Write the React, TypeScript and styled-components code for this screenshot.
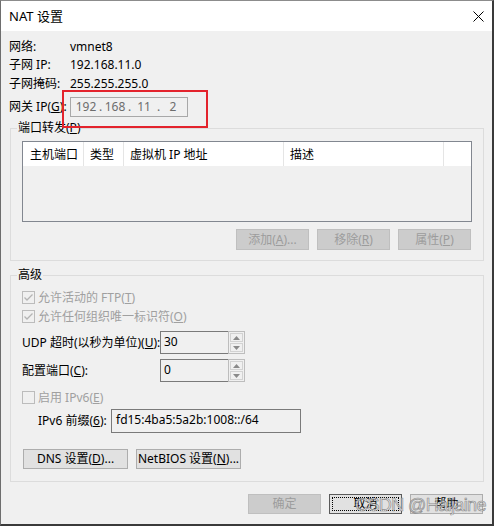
import styled, { createGlobalStyle } from "styled-components";

const GlobalStyle = createGlobalStyle`
  html, body {
    margin: 0;
    padding: 0;
    background: #ffffff;
  }
  body {
    font-family: "Noto Sans", "Noto Sans CJK SC", sans-serif;
    font-size: 12px;
    color: #000;
  }
`;

const columns = [
  { title: "主机端口", width: 61, pad: 7 },
  { title: "类型", width: 40, pad: 6 },
  { title: "虚拟机 IP 地址", width: 160, pad: 6 },
  { title: "描述", width: 160, pad: 6 },
  { title: "", width: 27, pad: 6 },
];

const CheckBox = ({ checked }: { checked: boolean }) => (
  <CheckIcon width="13" height="13" viewBox="0 0 13 13">
    <rect x="0.5" y="0.5" width="12" height="12" fill="#f0f0f0" stroke="#bcbcbc" />
    {checked && (
      <path d="M2.5 6.5 L5 9 L10.5 3.5" fill="none" stroke="#b4b4b4" strokeWidth="1.3" />
    )}
  </CheckIcon>
);

const Spin = ({ value }: { value: string }) => (
  <SpinBox>
    <SpinText>{value}</SpinText>
    <SpinCol>
      <SpinBtn>
        <svg width="7" height="4" viewBox="0 0 7 4">
          <path d="M0 4 L3.5 0 L7 4 Z" fill="#8a8a8a" />
        </svg>
      </SpinBtn>
      <SpinBtn>
        <svg width="7" height="4" viewBox="0 0 7 4">
          <path d="M0 0 L3.5 4 L7 0 Z" fill="#8a8a8a" />
        </svg>
      </SpinBtn>
    </SpinCol>
  </SpinBox>
);

const App = (): JSX.Element => {
  return (
    <>
      <GlobalStyle />
      <Window>
        <TitleBar>
          <Title>NAT 设置</Title>
          <svg width="11" height="11" viewBox="0 0 11 11">
            <path d="M0.5 0.5 L10.5 10.5 M10.5 0.5 L0.5 10.5" stroke="#000" strokeWidth="1" />
          </svg>
        </TitleBar>

        <InfoBlock>
          <InfoRow>
            <span>网络:</span>
            <span>vmnet8</span>
          </InfoRow>
          <InfoRow>
            <span>子网 IP:</span>
            <span>192.168.11.0</span>
          </InfoRow>
          <InfoRow $h={19}>
            <span>子网掩码:</span>
            <span>255.255.255.0</span>
          </InfoRow>
          <GatewayRow>
            <span>
              网关 IP(<u>G</u>):
            </span>
            <IpBox>
              <Octet>192</Octet>
              <Dot>.</Dot>
              <Octet>168</Octet>
              <Dot>.</Dot>
              <Octet>11</Octet>
              <Dot>.</Dot>
              <Octet>2</Octet>
            </IpBox>
            <Highlight />
          </GatewayRow>
        </InfoBlock>

        <GroupBox $top={3} $bottom={10}>
          <Legend>
            端口转发(<u>P</u>)
          </Legend>
          <ListView>
            <ListHeader>
              {columns.map((c, i) => (
                <HeaderCell key={i} $w={c.width} $pad={c.pad} $last={i === columns.length - 1}>
                  {c.title}
                </HeaderCell>
              ))}
            </ListHeader>
          </ListView>
          <ButtonRow>
            <Button disabled>
              添加(<u>A</u>)...
            </Button>
            <Button disabled>
              移除(<u>R</u>)
            </Button>
            <Button disabled>
              属性(<u>P</u>)
            </Button>
          </ButtonRow>
        </GroupBox>

        <GroupBox $top={6} $bottom={12}>
          <Legend>高级</Legend>
          <CheckRow>
            <CheckBox checked />
            <DimText>
              允许活动的 FTP(<u>T</u>)
            </DimText>
          </CheckRow>
          <CheckRow>
            <CheckBox checked />
            <DimText>
              允许任何组织唯一标识符(<u>O</u>)
            </DimText>
          </CheckRow>
          <SpinRow>
            <span>
              UDP 超时(以秒为单位)(<u>U</u>):
            </span>
            <Spin value="30" />
          </SpinRow>
          <SpinRow>
            <span>
              配置端口(<u>C</u>):
            </span>
            <Spin value="0" />
          </SpinRow>
          <CheckRow $top={6}>
            <CheckBox checked={false} />
            <DimText>
              启用 IPv6(<u>E</u>)
            </DimText>
          </CheckRow>
          <PrefixRow>
            <span>
              IPv6 前缀(<u>6</u>):
            </span>
            <TextBox>fd15:4ba5:5a2b:1008::/64</TextBox>
          </PrefixRow>
          <SettingsRow>
            <Button $w={105} $h={20}>
              DNS 设置(<u>D</u>)...
            </Button>
            <Button $w={105} $h={20}>
              NetBIOS 设置(<u>N</u>)...
            </Button>
          </SettingsRow>
        </GroupBox>

        <DialogButtons>
          <Button disabled $h={20}>
            确定
          </Button>
          <Button $h={20} $focused>
            取消
          </Button>
          <Button $h={20}>帮助</Button>
        </DialogButtons>

        <Watermark>CSDN @Haijaine</Watermark>
      </Window>
    </>
  );
};

const Window = styled.div`
  position: relative;
  box-sizing: border-box;
  width: 494px;
  height: 526px;
  display: flex;
  flex-direction: column;
  background: #f0f0f0;
  border-top: 1px solid #8c8c8c;
  border-left: 1px solid #6e6e6e;
  border-right: 2px solid #3a3a3a;
  border-bottom: 2px solid #3a3a3a;
  overflow: hidden;
`;

const TitleBar = styled.div`
  height: 30px;
  flex-shrink: 0;
  display: flex;
  align-items: center;
  justify-content: space-between;
  padding: 0 8px 0 8px;
  background: #ffffff;
`;

const Title = styled.span`
  font-size: 13px;
  line-height: 16px;
`;

const InfoBlock = styled.div`
  padding: 7px 0 0 8px;
`;

const InfoRow = styled.div<{ $h?: number }>`
  display: grid;
  grid-template-columns: 61px auto;
  align-items: center;
  height: ${(p) => p.$h ?? 18}px;
  line-height: 16px;
`;

const GatewayRow = styled.div`
  position: relative;
  display: grid;
  grid-template-columns: 61px 118px;
  align-items: center;
  height: 20px;
  margin-top: 4px;
  line-height: 16px;
`;

const IpBox = styled.div`
  box-sizing: border-box;
  height: 20px;
  display: flex;
  align-items: center;
  padding-left: 4px;
  border: 1px solid #a8a8a8;
  background: #f0f0f0;
  color: #6d6d6d;
`;

const Octet = styled.span`
  width: 22px;
  text-align: center;
`;

const Dot = styled.span`
  width: 7px;
  text-align: center;
`;

const Highlight = styled.div`
  position: absolute;
  left: 53px;
  top: -7px;
  width: 146px;
  height: 38px;
  box-sizing: border-box;
  border: 2px solid #e3232c;
  pointer-events: none;
`;

const GroupBox = styled.fieldset<{ $top: number; $bottom: number }>`
  box-sizing: border-box;
  width: 474px;
  min-width: 0;
  margin: ${(p) => p.$top}px 0 0 9px;
  padding: 5px 11px ${(p) => p.$bottom}px 11px;
  border: 1px solid #dcdcdc;
`;

const Legend = styled.legend`
  margin-left: -5px;
  padding: 0 1px;
  line-height: 16px;
`;

const ListView = styled.div`
  box-sizing: border-box;
  width: 450px;
  height: 81px;
  border: 1px solid #828790;
  background: #f0f0f0;
`;

const ListHeader = styled.div`
  display: flex;
  height: 24px;
  background: #ffffff;
`;

const HeaderCell = styled.div<{ $w: number; $pad: number; $last: boolean }>`
  box-sizing: border-box;
  width: ${(p) => p.$w}px;
  padding-left: ${(p) => p.$pad}px;
  display: flex;
  align-items: center;
  border-right: ${(p) => (p.$last ? "none" : "1px solid #e5e5e5")};
  white-space: nowrap;
`;

const ButtonRow = styled.div`
  display: flex;
  justify-content: flex-end;
  gap: 8px;
  margin-top: 7px;
  padding-right: 1px;
`;

const Button = styled.button<{ $w?: number; $h?: number; $focused?: boolean }>`
  box-sizing: border-box;
  width: ${(p) => p.$w ?? 73}px;
  height: ${(p) => p.$h ?? 21}px;
  padding: 0;
  font: inherit;
  line-height: 16px;
  color: #000;
  background: #e1e1e1;
  border: 1px solid ${(p) => (p.$focused ? "#5a5a5a" : "#adadad")};
  outline: ${(p) => (p.$focused ? "1px dotted #000" : "none")};
  outline-offset: -4px;
  white-space: nowrap;

  &:disabled {
    color: #9c9c9c;
    background: #cccccc;
    border-color: #bfbfbf;
  }
`;

const CheckIcon = styled.svg`
  flex-shrink: 0;
`;

const CheckRow = styled.div<{ $top?: number }>`
  display: flex;
  align-items: center;
  gap: 3px;
  height: 19px;
  margin-top: ${(p) => p.$top ?? 0}px;
  line-height: 16px;
`;

const DimText = styled.span`
  color: #a0a0a0;
`;

const SpinRow = styled.div`
  display: grid;
  grid-template-columns: 138px 85px;
  align-items: center;
  height: 23px;
  margin-top: 5px;
  line-height: 16px;
  white-space: nowrap;
`;

const SpinBox = styled.div`
  display: flex;
  height: 23px;
`;

const SpinText = styled.div`
  flex: 1;
  box-sizing: border-box;
  padding: 2px 0 0 3px;
  border: 1px solid #7a7a7a;
  border-right: none;
  line-height: 16px;
`;

const SpinCol = styled.div`
  box-sizing: border-box;
  width: 17px;
  display: flex;
  flex-direction: column;
  gap: 1px;
  padding: 1px;
  border: 1px solid #bdbdbd;
`;

const SpinBtn = styled.div`
  flex: 1;
  display: flex;
  align-items: center;
  justify-content: center;
  border: 1px solid #d2d2d2;
  background: #f0f0f0;
`;

const PrefixRow = styled.div`
  display: grid;
  grid-template-columns: 73px 190px;
  align-items: center;
  height: 24px;
  margin-top: 2px;
  padding-left: 16px;
  line-height: 16px;
  white-space: nowrap;
`;

const TextBox = styled.div`
  box-sizing: border-box;
  height: 24px;
  padding: 2px 0 0 4px;
  border: 1px solid #7a7a7a;
  line-height: 16px;
`;

const SettingsRow = styled.div`
  display: flex;
  gap: 8px;
  margin-top: 16px;
  padding-left: 1px;
`;

const DialogButtons = styled.div`
  display: flex;
  justify-content: flex-end;
  gap: 8px;
  margin-top: 12px;
  padding-right: 9px;
`;

const Watermark = styled.div`
  position: absolute;
  left: 354px;
  top: 493px;
  font-family: "Liberation Sans", Arial, sans-serif;
  font-size: 18px;
  line-height: 22px;
  letter-spacing: -0.6px;
  color: rgba(235, 235, 235, 0.75);
  -webkit-text-stroke: 0.7px rgba(110, 110, 110, 0.75);
  pointer-events: none;
  white-space: nowrap;
`;

export default App;
